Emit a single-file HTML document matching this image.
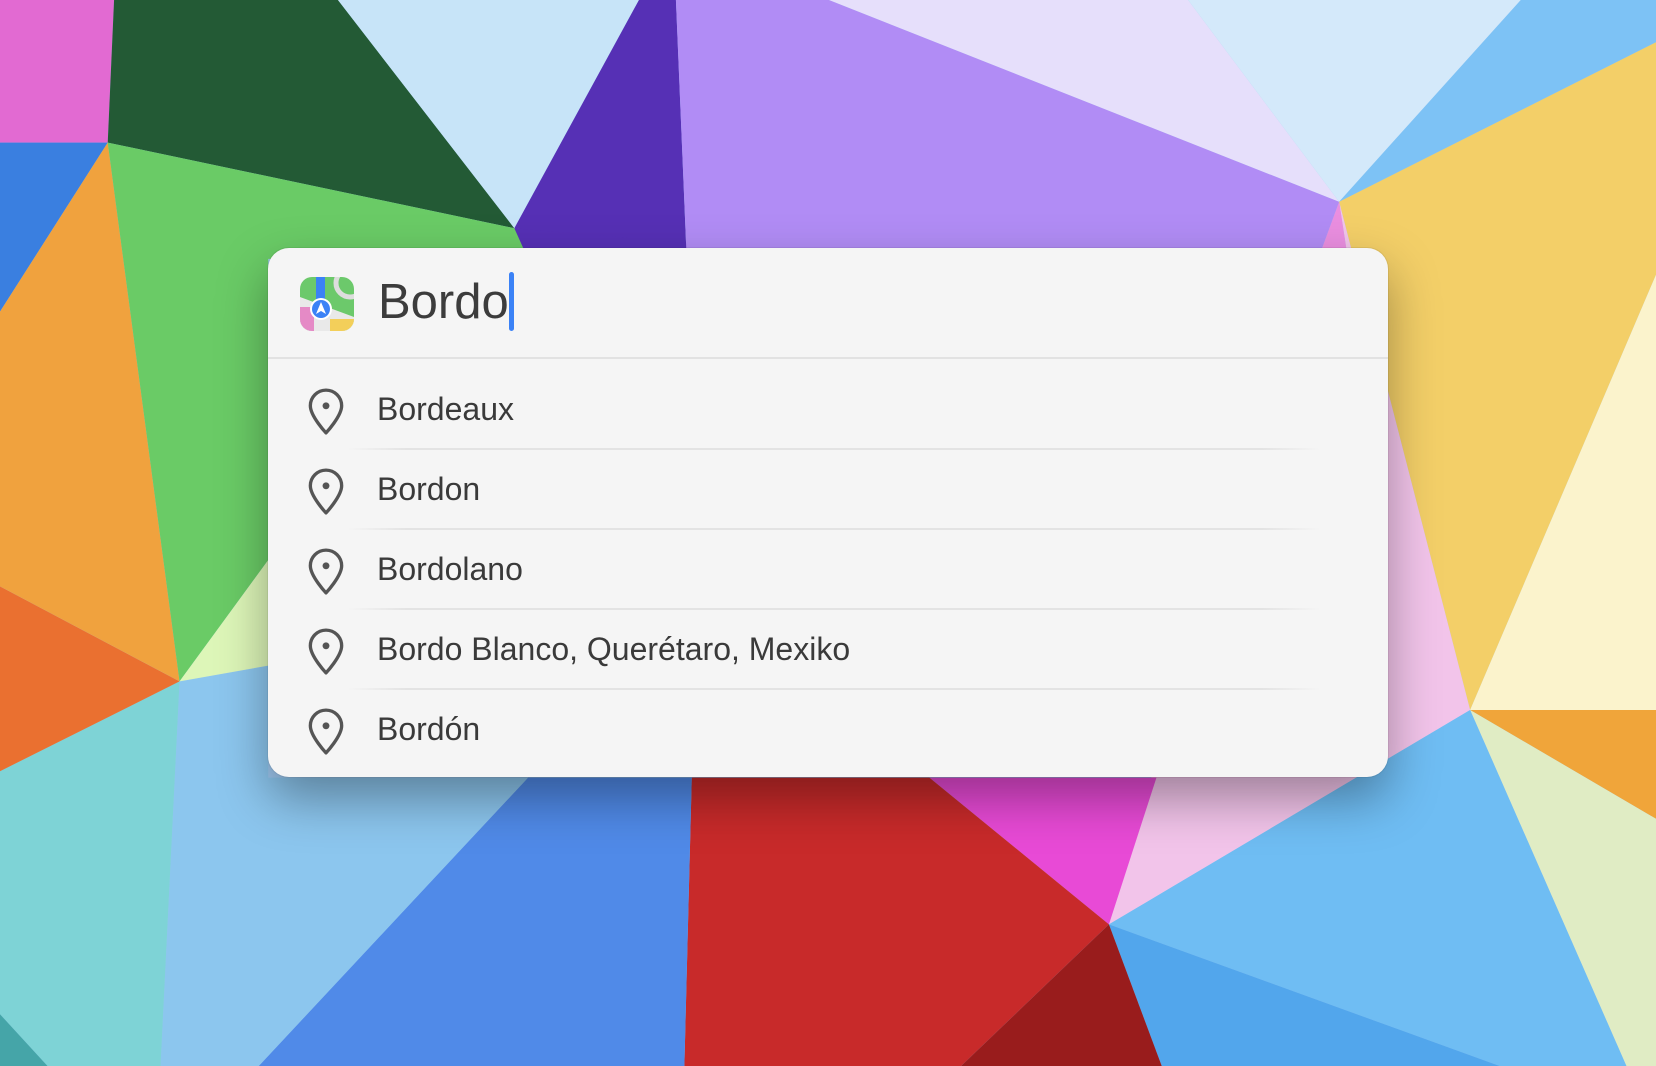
<!DOCTYPE html>
<html><head><meta charset="utf-8"><style>
html,body{margin:0;padding:0;width:1656px;height:1066px;overflow:hidden;font-family:"Liberation Sans",sans-serif}
#bg{position:absolute;left:0;top:0}
.panel{position:absolute;left:268px;top:248px;width:1120px;height:529px;background:#f5f5f5;border-radius:21px;box-shadow:0 22px 50px rgba(0,0,0,.35),0 0 0 1px rgba(0,0,0,.06)}
.head{position:absolute;left:0;top:0;width:100%;height:109px;border-bottom:2px solid #e2e2e2}
.icon{position:absolute;left:32px;top:29px}
.q{position:absolute;left:110px;top:24px;font-size:49px;color:#3c3c3c;line-height:60px}
.cur{position:absolute;left:241px;top:24px;width:5px;height:59px;background:#3b82f6;border-radius:3px}
.row{position:absolute;left:0;width:100%;height:80px}
.row span{position:absolute;left:109px;top:20px;font-size:32px;color:#3a3a3a;line-height:40px}
.row svg{position:absolute;left:37px;top:18px}
.sep{position:absolute;left:80px;width:972px;height:2px;background:linear-gradient(90deg,rgba(225,225,225,0),#e3e3e3 6%,#e3e3e3 94%,rgba(225,225,225,0))}
</style></head><body>
<svg id="bg" width="1656" height="1066" viewBox="0 0 1568 1009" preserveAspectRatio="none">
<rect width="1568" height="1009" fill="#9fc8f0"/>
<polygon points="0,0 108,0 102,135 0,135" fill="#e26ad2"/>
<polygon points="0,135 102,135 0,295" fill="#3a7fe0"/>
<polygon points="108,0 320,0 487,216 102,135" fill="#235a35"/>
<polygon points="320,0 605,0 487,216" fill="#c7e4f8"/>
<polygon points="605,0 640,0 650,240 487,216" fill="#5630b5"/>
<polygon points="487,216 650,230 650,245 490,245" fill="#5630b5"/>
<polygon points="640,0 785,0 1268,191 1250,240 650,240" fill="#b18cf5"/>
<polygon points="785,0 1125,0 1268,191" fill="#e6dffb"/>
<polygon points="1125,0 1440,0 1268,191" fill="#d4e9fa"/>
<polygon points="1440,0 1568,0 1568,40 1268,191" fill="#7dc2f5"/>
<polygon points="1268,191 1568,40 1568,260 1392,672" fill="#f3cf68"/>
<polygon points="1568,260 1568,672 1392,672" fill="#fbf3cc"/>
<polygon points="1392,672 1568,672 1568,775" fill="#f0a53a"/>
<polygon points="1392,672 1568,775 1568,1009 1540,1009" fill="#e0ecc4"/>
<polygon points="1268,191 1392,672 1050,875 1090,736 1300,400" fill="#f2c4ea"/>
<polygon points="1250,240 1268,191 1300,400" fill="#ea8ee0"/>
<polygon points="1392,672 1540,1009 1420,1009 1050,875" fill="#6fbdf3"/>
<polygon points="1050,875 1420,1009 1100,1009" fill="#52a6ec"/>
<polygon points="880,736 1095,736 1050,875" fill="#e84ad6"/>
<polygon points="655,736 880,736 1050,875 910,1009 648,1009" fill="#c82a2a"/>
<polygon points="1050,875 910,1009 1100,1009" fill="#991c1c"/>
<polygon points="500,736 655,736 648,1009 245,1009" fill="#508ae8"/>
<polygon points="170,645 254,630 254,736 500,736 245,1009 152,1009" fill="#8cc6ee"/>
<polygon points="0,730 170,645 152,1009 45,1009 0,960" fill="#7ed3d6"/>
<polygon points="0,960 45,1009 0,1009" fill="#45a5a8"/>
<polygon points="0,555 170,645 0,730" fill="#ea7030"/>
<polygon points="0,295 102,135 170,645 0,555" fill="#f0a23e"/>
<polygon points="102,135 487,216 500,245 254,245 254,530 170,645" fill="#6acb66"/>
<polygon points="170,645 254,530 254,630" fill="#ddf6b8"/>
</svg>
<div class="panel">
 <div class="head">
  <svg class="icon" width="54" height="54" viewBox="0 0 54 54">
   <defs><clipPath id="c"><rect width="54" height="54" rx="12"/></clipPath></defs>
   <g clip-path="url(#c)">
    <rect width="54" height="54" fill="#6cc96b"/>
    <path d="M0 20 L54 40 L54 54 L0 54Z" fill="#e9e9e9"/>
    <rect x="0" y="30" width="14" height="24" fill="#e58ac6"/>
    <rect x="30" y="42" width="24" height="12" fill="#f3cf5a"/>
    <circle cx="50" cy="6" r="14" fill="none" stroke="#ddd" stroke-width="5"/>
    <rect x="16" y="0" width="9" height="28" fill="#3b82f6"/>
    <circle cx="21" cy="32" r="11" fill="#fff"/>
    <circle cx="21" cy="32" r="9" fill="#3b82f6"/>
    <path d="M21 25 L26 37 L21 34 L16 37Z" fill="#fff"/>
   </g>
  </svg>
  <div class="q">Bordo</div><div class="cur"></div>
 </div>
 <div class="row" style="top:121px"><svg width="42" height="48" viewBox="0 0 40 46"><path d="M20 44 C20 44 5 28 5 18 A15 15 0 0 1 35 18 C35 28 20 44 20 44Z" fill="none" stroke="#555" stroke-width="3.2" stroke-linejoin="round"/><circle cx="20" cy="18" r="3.3" fill="#555"/></svg><span>Bordeaux</span></div>
 <div class="sep" style="top:200px"></div>
 <div class="row" style="top:201px"><svg width="42" height="48" viewBox="0 0 40 46"><path d="M20 44 C20 44 5 28 5 18 A15 15 0 0 1 35 18 C35 28 20 44 20 44Z" fill="none" stroke="#555" stroke-width="3.2" stroke-linejoin="round"/><circle cx="20" cy="18" r="3.3" fill="#555"/></svg><span>Bordon</span></div>
 <div class="sep" style="top:280px"></div>
 <div class="row" style="top:281px"><svg width="42" height="48" viewBox="0 0 40 46"><path d="M20 44 C20 44 5 28 5 18 A15 15 0 0 1 35 18 C35 28 20 44 20 44Z" fill="none" stroke="#555" stroke-width="3.2" stroke-linejoin="round"/><circle cx="20" cy="18" r="3.3" fill="#555"/></svg><span>Bordolano</span></div>
 <div class="sep" style="top:360px"></div>
 <div class="row" style="top:361px"><svg width="42" height="48" viewBox="0 0 40 46"><path d="M20 44 C20 44 5 28 5 18 A15 15 0 0 1 35 18 C35 28 20 44 20 44Z" fill="none" stroke="#555" stroke-width="3.2" stroke-linejoin="round"/><circle cx="20" cy="18" r="3.3" fill="#555"/></svg><span>Bordo Blanco, Querétaro, Mexiko</span></div>
 <div class="sep" style="top:440px"></div>
 <div class="row" style="top:441px"><svg width="42" height="48" viewBox="0 0 40 46"><path d="M20 44 C20 44 5 28 5 18 A15 15 0 0 1 35 18 C35 28 20 44 20 44Z" fill="none" stroke="#555" stroke-width="3.2" stroke-linejoin="round"/><circle cx="20" cy="18" r="3.3" fill="#555"/></svg><span>Bordón</span></div>
</div>
</body></html>
